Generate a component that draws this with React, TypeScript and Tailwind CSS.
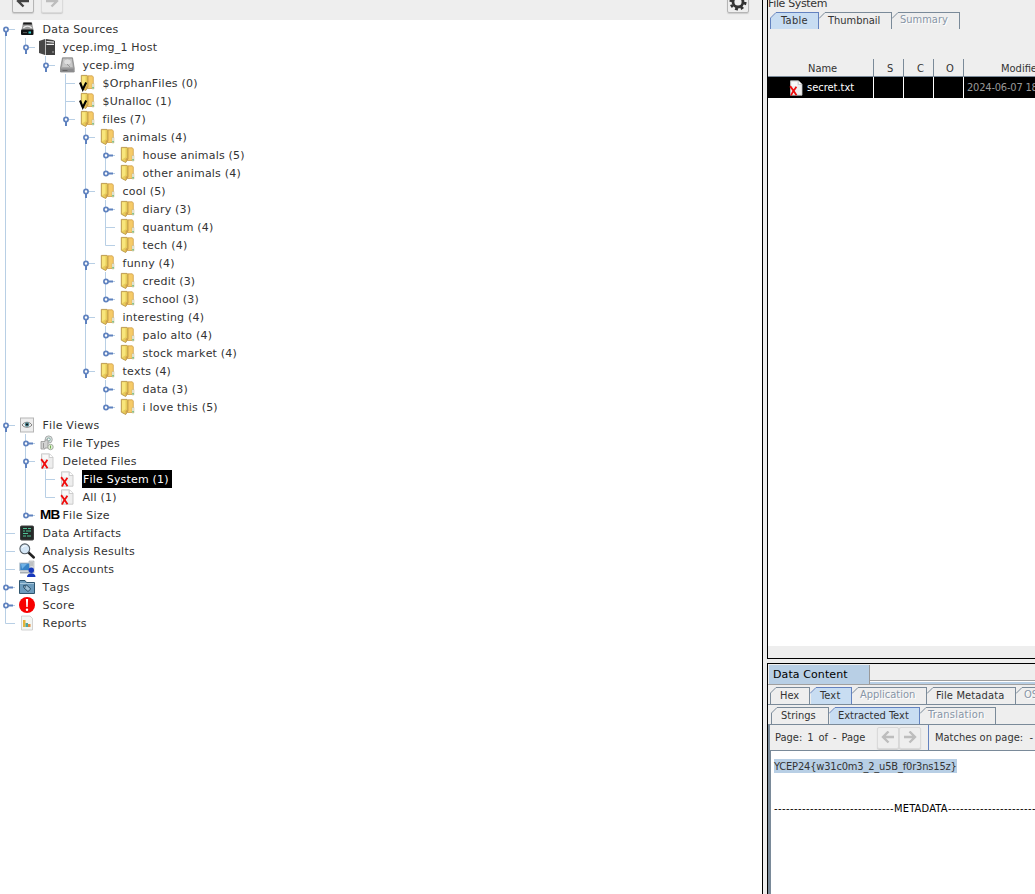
import type { ReactNode } from 'react';

type IconName =
  | 'disk' | 'host' | 'drive' | 'vfolder' | 'folder' | 'eye' | 'types' | 'deleted' | 'mb'
  | 'artifacts' | 'search' | 'accounts' | 'tags' | 'score' | 'reports';

type Node = { label: string; icon: IconName; children?: Node[]; closed?: boolean; selected?: boolean };

const folder = (label: string, children?: Node[]): Node => ({ label, icon: 'folder', children });
const closed = (label: string): Node => ({ label, icon: 'folder', closed: true });

const tree: Node[] = [
  {
    label: 'Data Sources', icon: 'disk', children: [
      {
        label: 'ycep.img_1 Host', icon: 'host', children: [
          {
            label: 'ycep.img', icon: 'drive', children: [
              { label: '$OrphanFiles (0)', icon: 'vfolder' },
              { label: '$Unalloc (1)', icon: 'vfolder' },
              folder('files (7)', [
                folder('animals (4)', [closed('house animals (5)'), closed('other animals (4)')]),
                folder('cool (5)', [closed('diary (3)'), folder('quantum (4)'), folder('tech (4)')]),
                folder('funny (4)', [closed('credit (3)'), closed('school (3)')]),
                folder('interesting (4)', [closed('palo alto (4)'), closed('stock market (4)')]),
                folder('texts (4)', [closed('data (3)'), closed('i love this (5)')]),
              ]),
            ],
          },
        ],
      },
    ],
  },
  {
    label: 'File Views', icon: 'eye', children: [
      { label: 'File Types', icon: 'types', closed: true },
      {
        label: 'Deleted Files', icon: 'deleted', children: [
          { label: 'File System (1)', icon: 'deleted', selected: true },
          { label: 'All (1)', icon: 'deleted' },
        ],
      },
      { label: 'File Size', icon: 'mb', closed: true },
    ],
  },
  { label: 'Data Artifacts', icon: 'artifacts' },
  { label: 'Analysis Results', icon: 'search' },
  { label: 'OS Accounts', icon: 'accounts' },
  { label: 'Tags', icon: 'tags', closed: true },
  { label: 'Score', icon: 'score', closed: true },
  { label: 'Reports', icon: 'reports' },
];

const FolderShape = () => (
  <>
    <path d="M8.500.8h4.800l1 1.200v11.500h-5.800z" fill="#f6cb68" stroke="#c9973f" strokeWidth=".7" />
    <path d="M13 8.500h2V14h-2z" fill="#e6eee8" stroke="#c3a868" strokeWidth=".4" />
    <path d="M13.400 12h1.300v1.600h-1.300z" fill="#5bb56c" />
    <path d="M2.300.4h5.600l1 1V12l-2.200 3.500-4.400-2.300z" fill="#e8cc5a" stroke="#b08a3c" strokeWidth=".8" />
    <path d="M3 1.200h3.500v9L3 12.500z" fill="#f8e67c" />
    <path d="M6.500 12l2-1.500v2L6.800 15z" fill="#d0a04c" />
  </>
);

const DeletedShape = () => (
  <>
    <path d="M2.500.8h8l3.500 3.500v10.900h-11.500z" fill="#eee" stroke="#c2c2c2" strokeWidth=".8" />
    <path d="M4 2h5v4H4z" fill="#f9f9f9" />
    <path d="M10.300 1v3.500h3.700" fill="#fff" stroke="#bbb" strokeWidth=".7" />
    <path d="M2 6.300C4 8 6.500 12.500 8.500 15.300M8.400 6.800C6.800 9 4.300 12 3 15.500" fill="none" stroke="#f00a0a" strokeWidth="1.800" />
  </>
);

const shapes: Record<Exclude<IconName, 'mb'>, ReactNode> = {
  disk: (
    <>
      <path d="M4 1.500h9l1.500 7.500h-12z" fill="#9a9a9a" /><path d="M4.500 1.500h8l.5 2h-9z" fill="#1b1b1b" />
      <path d="M4.300 7c2-2.500 6.400-2.500 8.400 0" stroke="#e8e8e8" fill="none" strokeWidth="1.300" />
      <rect x="2" y="8.500" width="12.500" height="5.500" rx="1" fill="#101214" />
      <path d="M4 11.500h4" stroke="#555" /><rect x="9.500" y="10.500" width="2.500" height="2" fill="#35cfd0" />
    </>
  ),
  host: (
    <>
      <path d="M0 2l6-2v16l-6-2z" fill="#484848" /><path d="M6.800 0L14 1l2 1v14H6.800z" fill="#404040" />
      <path d="M7.500 2.500l7.500 .700M7.500 5.300H15" stroke="#eee" strokeWidth="1.200" />
      <path d="M6.500 0v16" stroke="#aaa" strokeWidth=".6" /><path d="M14 12v2" stroke="#aaa" />
    </>
  ),
  drive: (
    <>
      <path d="M3.500.8h10l1.700 10.200v4H1.500v-4z" fill="#a9a9a9" stroke="#777" strokeWidth=".7" />
      <path d="M4.300 1.800h8.400l1 8.200H3.200z" fill="#c8c8c8" />
      <ellipse cx="8.500" cy="5" rx="3.900" ry="3" fill="#dedede" stroke="#b5b5b5" strokeWidth=".6" />
      <path d="M2 11.500h12.700V15H2z" fill="#8b8b8d" /><path d="M3.500 13.500h5" stroke="#666" />
      <path d="M8 7l3 3" stroke="#999" />
    </>
  ),
  vfolder: (
    <>
      <FolderShape />
      <path d="M1 7.500l2.800 7L7.200 7.500" fill="none" stroke="#000" strokeWidth="2.100" />
    </>
  ),
  folder: <FolderShape />,
  eye: (
    <>
      <rect x="1.500" y="1" width="13" height="14" fill="#eee" stroke="#b5b5b5" />
      <path d="M3 8c2.500-3.700 7.500-3.700 10 0-2.500 3-7.500 3-10 0z" fill="#f8f8f8" stroke="#666" strokeWidth=".8" />
      <circle cx="8" cy="7.500" r="2.300" fill="#4d8793" /><circle cx="8" cy="7.500" r="1.100" fill="#111" />
    </>
  ),
  types: (
    <>
      <circle cx="9.700" cy="4.500" r="3.600" fill="#d8dfdd" stroke="#a9adad" />
      <circle cx="9.700" cy="4.500" r="1.500" fill="#fff" stroke="#7fa7a0" />
      <path d="M2 6.500h4V5h3v8H6v1H2z" fill="#d2d2d2" stroke="#969696" strokeWidth=".8" />
      <path d="M4.500 8v5" stroke="#999" /><circle cx="11.500" cy="12" r="2.700" fill="#e3efd9" stroke="#a4aba0" />
      <path d="M11.500 10.500v3" stroke="#6eb14d" />
    </>
  ),
  deleted: <DeletedShape />,
  artifacts: (
    <>
      <rect x="1.500" y="1" width="13" height="14" rx="1" fill="#252a28" stroke="#3f3f3f" />
      <path d="M4 3.500h4M9 3.500h3M4 6h2M7 6h5M4 8.500h5M4 11h3M8 11h4" stroke="#4fc596" strokeWidth="1.200" />
    </>
  ),
  search: (
    <>
      <path d="M9.500 9.500l5.300 5" stroke="#222" strokeWidth="2.500" strokeLinecap="round" />
      <circle cx="5.800" cy="5.800" r="4.900" fill="#d5e7f7" stroke="#555e66" strokeWidth="1.100" />
      <path d="M3 5c1-2 3-2.500 4.500-2" stroke="#fff" fill="none" />
    </>
  ),
  accounts: (
    <>
      <path d="M10 0h5v12h-5z" fill="#d7dadc" stroke="#a6a9ac" strokeWidth=".6" /><path d="M11 2h3M11 4h3" stroke="#888" strokeWidth=".6" />
      <rect x=".8" y="2" width="10" height="7.500" fill="#3683c7" stroke="#b9c3cb" />
      <path d="M2 3h6L3 8z" fill="#6fb2e6" /><path d="M1 11.500h9" stroke="#a6adb3" strokeWidth="2" />
      <circle cx="12.300" cy="9.200" r="2.700" fill="#1738bb" /><path d="M8 16c0-5 8.500-5 8.500 0z" fill="#1738bb" />
    </>
  ),
  tags: (
    <>
      <path d="M.5 14.500v-13h5.500l1.500 2h8v11z" fill="#6d9cbd" stroke="#2f566f" />
      <path d="M1 4.500h14" stroke="#a8c8dd" />
      <path d="M4.500 6.500l3.300-.3 4 3.700-2.800 2.600-4-3.500z" fill="#9dbfd6" stroke="#294f69" /><circle cx="6.300" cy="7.800" r=".6" fill="#234" />
    </>
  ),
  score: (
    <>
      <circle cx="8" cy="8" r="8" fill="#f70000" /><path d="M6.900 2h2.200l-.4 8H7.300z" fill="#fff" /><circle cx="8" cy="12.800" r="1.200" fill="#fff" />
    </>
  ),
  reports: (
    <>
      <path d="M2.500 1h8.500l2.500 2.500V15h-11z" fill="#f3f6f3" stroke="#c9c9c9" strokeWidth=".8" />
      <path d="M4 5h2.500v7H4z" fill="#e4b43a" /><path d="M6.500 8H9v4H6.500z" fill="#4fa6a0" /><path d="M9 9h2.500v3H9z" fill="#e08a3a" />
    </>
  ),
};

function Icon({ name }: { name: IconName }) {
  if (name === 'mb') {
    return <span className="ml-px w-[15px] shrink-0 font-['Liberation_Sans'] text-[13.500px] font-bold leading-[18px] tracking-[-0.8px] text-black whitespace-nowrap">MB</span>;
  }
  return <svg className="h-4 w-4 shrink-0 overflow-visible" viewBox="0 0 16 16">{shapes[name]}</svg>;
}

function Connector({ node, last, root }: { node: Node; last: boolean; root: boolean }) {
  return (
    <svg className="h-[18px] w-[19px] shrink-0 overflow-visible" viewBox="0 0 19 18">
      <path d={`M5.500 ${root ? 9 : 0}V${last ? 9.500 : 18}M5.500 9.500H15`} stroke="#b8cfe5" fill="none" />
      {(node.children || node.closed) && (
        <>
          <path d={node.closed ? 'M8 9.500h5' : 'M6 12v4'} stroke="#5f82bf" strokeWidth="2" />
          <circle cx="6" cy="9.500" r="2.100" fill="#fff" stroke="#5f82bf" strokeWidth="1.700" />
        </>
      )}
    </svg>
  );
}

function Rows({ nodes, guides = [] }: { nodes: Node[]; guides?: boolean[] }) {
  return (
    <>
      {nodes.map((node, i) => {
        const last = i === nodes.length - 1;
        return (
          <div key={node.label}>
            <div className="flex h-[18px] items-center">
              {guides.map((on, g) => (
                <svg key={g} className="h-[18px] w-5 shrink-0" viewBox="0 0 20 18">
                  {on && <path d="M5.500 0v18" stroke="#b8cfe5" />}
                </svg>
              ))}
              <Connector node={node} last={last} root={guides.length === 0 && i === 0} />
              <Icon name={node.icon} />
              <span className={node.selected
                ? 'ml-[7px] h-[18px] bg-black pl-px pr-[3px] leading-[19px] text-white'
                : 'ml-[7.600px] leading-[18px] h-[18px] pt-px'}>{node.label}</span>
            </div>
            {node.children && <Rows nodes={node.children} guides={[...guides, !last]} />}
          </div>
        );
      })}
    </>
  );
}

function Tab({ label, width, text, active, disabled, first }: { label: string; width: string; text: string; active?: boolean; disabled?: boolean; first?: boolean }) {
  const stroke = active ? '#6382bf' : '#7a8a99';
  return (
    <div className={`flex h-full shrink-0 ${width}`}>
      <svg className="h-full w-[7px] shrink-0" viewBox="0 0 7 17" preserveAspectRatio="none">
        <path d="M1 17V6l5.500-5.500H7V17z" fill={active ? '#c8ddf2' : '#eee'} />
        <path d={first ? 'M.5 17V6L6 .5h1' : 'M0 6.500L6 .5h1'} fill="none" stroke={stroke} />
      </svg>
      <div className={`grow border-t border-r ${text} ${active ? 'border-[#6382bf] bg-[#c8ddf2]' : 'border-[#7a8a99]'} ${disabled ? 'leading-[13px] text-[#8795a6] [text-shadow:1px_1px_#fff]' : 'leading-[15px]'}`}>
        {label}
      </div>
    </div>
  );
}

function ArrowButton({ right, dim, className = '' }: { right?: boolean; dim?: boolean; className?: string }) {
  return (
    <div className={`flex h-[22px] w-[22px] shrink-0 items-center justify-center rounded-[2px] border shadow-[0_1px_1px_#ccc] ${dim ? 'border-[#dadada] bg-[#eee]' : 'border-[#b5b5b5] bg-[#eee]'} ${className}`}>
      <svg className="h-[14px] w-[14px] shrink-0" viewBox="0 0 14 14">
        <path d={right ? 'M1 6h10M6.500.5L12 6l-5.500 5.500' : 'M13 6H3M7.500.5L2 6l5.500 5.500'} fill="none" stroke={dim ? '#bdbdbd' : '#444'} strokeWidth="2.400" />
      </svg>
    </div>
  );
}

const headers = [
  { label: 'Name', cell: 'w-[106px] pl-10' },
  { label: 'S', cell: 'w-[30px] pl-[13px]' },
  { label: 'C', cell: 'w-[30px] pl-[13px]' },
  { label: 'O', cell: 'w-[30px] pl-[12px]' },
];

export default function App() {
  return (
    <div className="flex h-[894px] w-[1035px] overflow-hidden bg-[#eee] font-['DejaVu_Sans',sans-serif] text-[11px] text-[#333] whitespace-nowrap">
      <section className="flex w-[763px] shrink-0 flex-col border-r border-black bg-white tracking-[0.2px] [font-kerning:none]">
        <header className="flex h-5 items-start bg-[#eee]">
          <ArrowButton className="ml-3 -mt-[9px]" />
          <ArrowButton right dim className="ml-[7px] -mt-[9px]" />
          <div className="ml-auto mr-[13px] -mt-[9px] flex h-[22px] w-[22px] items-center justify-center rounded-[2px] border border-[#b5b5b5] shadow-[0_1px_1px_#ccc]">
            <svg className="h-[18px] w-[18px]" viewBox="0 0 18 18">
              <circle cx="9" cy="9" r="7.300" fill="none" stroke="#333" strokeWidth="2.500" strokeDasharray="2.900 2.833" />
              <circle cx="9" cy="9" r="5" fill="none" stroke="#333" strokeWidth="2.800" />
            </svg>
          </div>
        </header>
        <Rows nodes={tree} />
      </section>

      <div className="ml-1 flex min-w-0 grow flex-col font-['DejaVu_Sans_Condensed','DejaVu_Sans',sans-serif] [font-stretch:condensed]">
        <section className="flex h-[659px] shrink-0 flex-col border-b border-l border-black">
          <div className="h-3 leading-[8px] font-['DejaVu_Sans'] [font-stretch:normal] tracking-[-0.35px]">File System</div>
          <div className="flex h-[17px] pl-[2px]">
            <Tab label="Table" width="w-[49px]" text="pl-[4px] tracking-[0.3px]" active first />
            <Tab label="Thumbnail" width="w-[73px]" text="pl-[2px]" />
            <Tab label="Summary" width="w-[68px]" text="pl-[1px]" disabled />
          </div>
          <div className="mt-[30px] flex h-[18px]">
            {headers.map(h => (
              <div key={h.label} className={`shrink-0 border-r border-b border-[#7a8a99] leading-[19px] ${h.cell}`}>{h.label}</div>
            ))}
            <div className="w-[71px] shrink-0 border-b border-[#7a8a99] pl-[37px] leading-[19px]">Modified Time</div>
          </div>
          <div className="flex h-[21px] bg-black text-white">
            <div className="flex w-[106px] shrink-0 items-center border-r border-white pl-5">
              <svg className="h-4 w-4" viewBox="0 0 16 16"><DeletedShape /></svg>
              <span className="ml-[3px] pt-px">secret.txt</span>
            </div>
            <div className="w-[30px] shrink-0 border-r border-white" />
            <div className="w-[30px] shrink-0 border-r border-white" />
            <div className="w-[30px] shrink-0 border-r border-white" />
            <div className="pl-[3px] leading-[21px] tracking-[-0.2px] text-[#999]">2024-06-07 18:25</div>
          </div>
          <div className="grow bg-white" />
          <div className="h-3 shrink-0" />
        </section>

        <section className="mt-1 flex grow flex-col border-l border-t border-black">
          <div className="flex h-[21px] border-b border-[#a0a0a0]">
            <div className="ml-px mt-px w-[101px] border-r border-[#999] bg-[#b8cfe5] pl-[4px] font-['DejaVu_Sans'] leading-[19px] text-black [font-stretch:normal] tracking-[0.1px]">Data Content</div>
            <div className="flex grow flex-col">
              <div className="h-[17px] border-b border-[#a0a0a0]" />
              <div className="h-px bg-white" />
              <div className="grow bg-[#b8cfe5]" />
            </div>
          </div>
          <div className="flex h-5 border-b border-[#7a8a99] pl-[2px] pt-[2px]">
            <Tab label="Hex" width="w-[40px]" text="pl-[3px]" first />
            <Tab label="Text" width="w-[42px]" text="pl-[3px] tracking-[0.15px]" active />
            <Tab label="Application" width="w-[75px]" text="pl-[1px]" disabled />
            <Tab label="File Metadata" width="w-[89px]" text="pl-[2px] tracking-[0.15px]" />
            <Tab label="OS Account" width="w-[90px]" text="pl-[1px]" disabled />
          </div>
          <div className="flex h-5 border-b border-[#7a8a99] pl-[3px] pt-[2px]">
            <Tab label="Strings" width="w-[58px]" text="pl-[3px]" first />
            <Tab label="Extracted Text" width="w-[91px]" text="pl-[2px]" active />
            <Tab label="Translation" width="w-[76px]" text="pl-[1px] tracking-[0.25px]" disabled />
          </div>
          <div className="flex h-[26px] border-b border-l-2 border-[#7a8a99] leading-[25px]">
            <div className="flex w-[159px] shrink-0 items-center border-r border-[#6382bf] pl-[5px]">
              <span className="w-[102px] shrink-0 [word-spacing:1.800px]">Page: 1 of - Page</span>
              <ArrowButton dim />
              <ArrowButton right dim />
            </div>
            <span className="pl-[6px]">Matches on page:&nbsp; - of - Match</span>
          </div>
          <div className="grow border-l-[3px] border-[#7a8a99] bg-white pl-[3px] pt-2">
            <div className="w-[183px] bg-[#b8cfe5] leading-[15px] h-[14px] tracking-[-0.17px]">{'YCEP24{w31c0m3_2_u5B_f0r3ns15z}'}</div>
            <div className="mt-7 flex w-[261px] overflow-hidden leading-[15px] text-black">
              <span className="w-[120px] shrink-0 tracking-[0.43px]">------------------------------</span>
              <span className="w-[54px] shrink-0 tracking-[0.2px]">METADATA</span>
              <span className="tracking-[0.43px]">----------------------</span>
            </div>
          </div>
        </section>
      </div>
    </div>
  );
}
